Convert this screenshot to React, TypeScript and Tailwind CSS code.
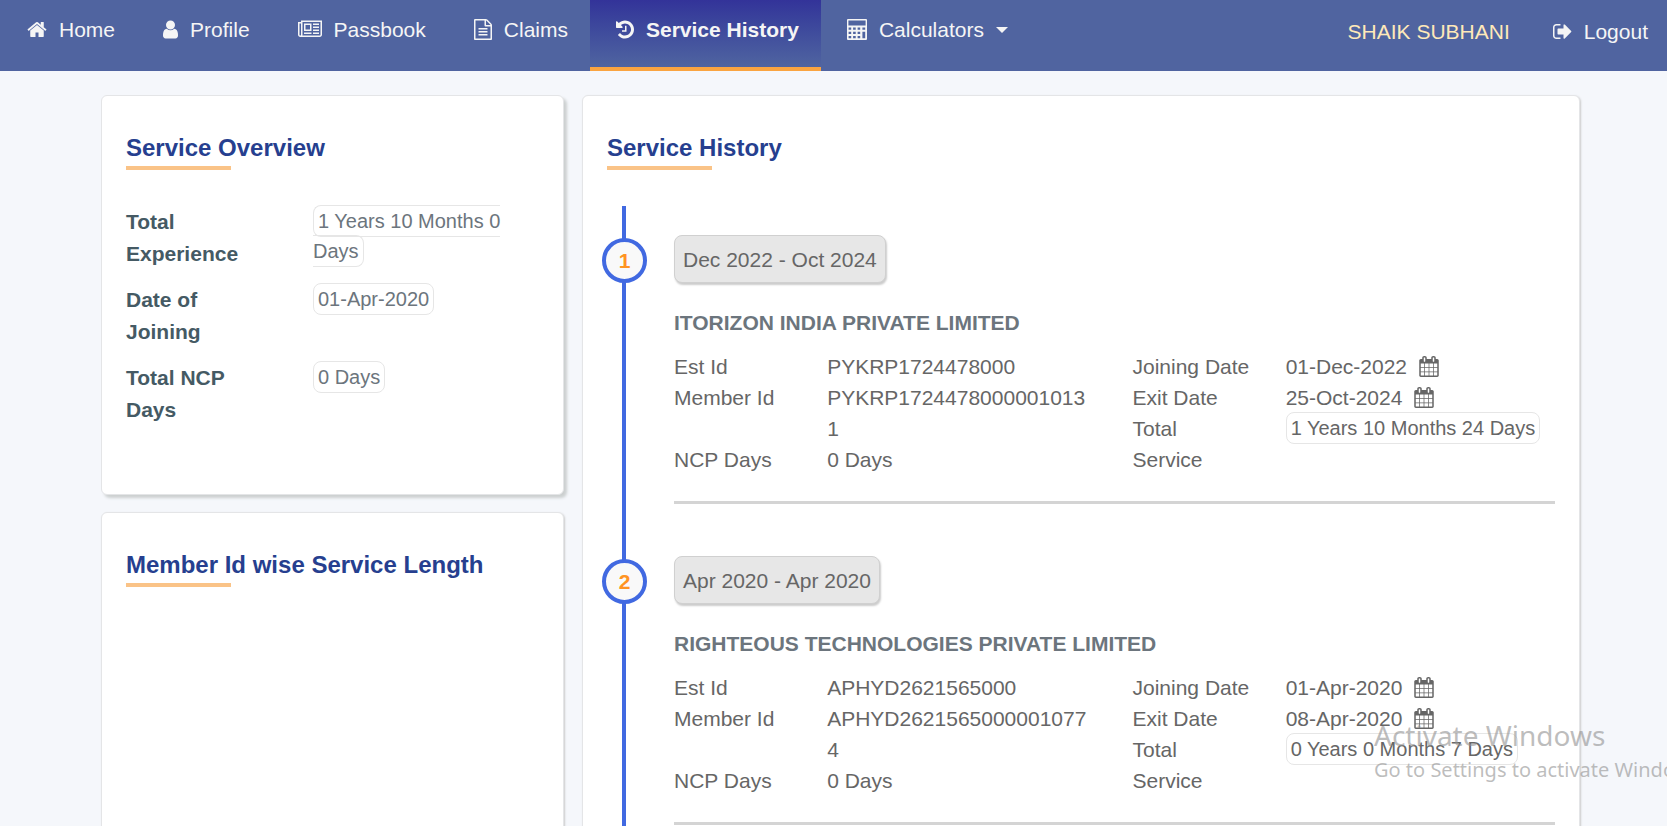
import type { ReactNode } from "react";

type IconProps = { box: string; d: string; className?: string };

function Glyph({ box, d, className = "" }: IconProps) {
  return (
    <svg viewBox={box} className={`h-[21px] shrink-0 ${className}`} fill="currentColor" aria-hidden="true">
      <path d={d} />
    </svg>
  );
}

const HOME =
  "M1472 992v480q0 26-19 45t-45 19h-384v-384h-256v384h-384q-26 0-45-19t-19-45v-480q0-1 .5-3t.5-3l575-474 575 474q1 2 1 6zm223-69l-62 74q-8 9-21 11h-3q-13 0-21-7l-692-577-692 577q-12 8-24 7-13-2-21-11l-62-74q-8-10-7-23.5t11-21.5l719-599q32-26 76-26t76 26l244 204v-195q0-14 9-23t23-9h192q14 0 23 9t9 23v408l219 182q10 8 11 21.5t-7 23.5z";
const USER =
  "M1536 1399q0 109-62.5 187t-150.5 78h-854q-88 0-150.5-78t-62.5-187q0-85 8.5-160.5t31.5-152 58.5-131 94-89 134.5-34.5q131 128 313 128t313-128q76 0 134.5 34.5t94 89 58.5 131 31.5 152 8.5 160.5zm-256-887q0 159-112.5 271.5t-271.5 112.5-271.5-112.5-112.5-271.5 112.5-271.5 271.5-112.5 271.5 112.5 112.5 271.5z";
const NEWS =
  "M1024 512h-384v384h384v-384zm128 640v128h-640v-128h640zm0-768v640h-640v-640h640zm640 768v128h-512v-128h512zm0-256v128h-512v-128h512zm0-256v128h-512v-128h512zm0-256v128h-512v-128h512zm-1536 960v-960h-128v960q0 26 19 45t45 19 45-19 19-45zm1664 0v-1088h-1536v1088q0 33-11 64h1483q26 0 45-19t19-45zm128-1216v1216q0 80-56 136t-136 56h-1664q-80 0-136-56t-56-136v-1088h256v-128h1792z";
const FILE =
  "M1596 380q28 28 48 76t20 88v1152q0 40-28 68t-68 28h-1344q-40 0-68-28t-28-68v-1600q0-40 28-68t68-28h896q40 0 88 20t76 48zm-444-244v376h376q-10-29-22-41l-313-313q-12-12-41-22zm384 1528v-1024h-416q-40 0-68-28t-28-68v-416h-768v1536h1280zm-1024-864q0-14 9-23t23-9h704q14 0 23 9t9 23v64q0 14-9 23t-23 9h-704q-14 0-23-9t-9-23v-64zm736 224q14 0 23 9t9 23v64q0 14-9 23t-23 9h-704q-14 0-23-9t-9-23v-64q0-14 9-23t23-9h704zm0 256q14 0 23 9t9 23v64q0 14-9 23t-23 9h-704q-14 0-23-9t-9-23v-64q0-14 9-23t23-9h704z";
const HISTORY =
  "M1664 896q0 156-61 298t-164 245-245 164-298 61q-172 0-327-72.5t-264-204.5q-7-10-6.5-22.5t8.5-20.5l137-138q10-9 25-9 16 2 23 12 73 95 179 147t225 52q104 0 198.5-40.5t163.5-109.5 109.5-163.5 40.5-198.5-40.5-198.5-109.5-163.5-163.5-109.5-198.5-40.5q-98 0-188 35.5t-160 101.5l137 138q31 30 14 69-17 40-59 40h-448q-26 0-45-19t-19-45v-448q0-42 40-59 39-17 69 14l130 129q107-101 244.5-156.5t284.5-55.5q156 0 298 61t245 164 164 245 61 298zm-640-288v448q0 14-9 23t-23 9h-320q-14 0-23-9t-9-23v-64q0-14 9-23t23-9h224v-352q0-14 9-23t23-9h64q14 0 23 9t9 23z";
const SIGN_OUT =
  "M704 1440q0 4 1 20t.5 26.5-3 23.5-10 19.5-20.5 6.5h-320q-119 0-203.5-84.5t-84.5-203.5v-704q0-119 84.5-203.5t203.5-84.5h320q13 0 22.5 9.5t9.5 22.5q0 4 1 20t.5 26.5-3 23.5-10 19.5-20.5 6.5h-320q-66 0-113 47t-47 113v704q0 66 47 113t113 47h312l11.5 1 11.5 3 8 5.5 7 9 2 13.5zm928-544q0 26-19 45l-544 544q-19 19-45 19t-45-19-19-45v-288h-448q-26 0-45-19t-19-45v-384q0-26 19-45t45-19h448v-288q0-26 19-45t45-19 45 19l544 544q19 19 19 45z";
const CALENDAR =
  "M192 1664h288v-288h-288v288zm352 0h320v-288h-320v288zm-352-352h288v-320h-288v320zm352 0h320v-320h-320v320zm-352-384h288v-288h-288v288zm736 736h320v-288h-320v288zm-384-736h320v-288h-320v288zm768 736h288v-288h-288v288zm-384-352h320v-320h-320v320zm-352-864v-288q0-13-9.5-22.5t-22.5-9.5h-64q-13 0-22.5 9.5t-9.5 22.5v288q0 13 9.5 22.5t22.5 9.5h64q13 0 22.5-9.5t9.5-22.5zm736 864h288v-320h-288v320zm-384-384h320v-288h-320v288zm384 0h288v-288h-288v288zm32-480v-288q0-13-9.5-22.5t-22.5-9.5h-64q-13 0-22.5 9.5t-9.5 22.5v288q0 13 9.5 22.5t22.5 9.5h64q13 0 22.5-9.5t9.5-22.5zm384-64v1280q0 52-38 90t-90 38h-1408q-52 0-90-38t-38-90v-1280q0-52 38-90t90-38h128v-96q0-66 47-113t113-47h64q66 0 113 47t47 113v96h384v-96q0-66 47-113t113-47h64q66 0 113 47t47 113v96h128q52 0 90 38t38 90z";

function CalculatorIcon() {
  return (
    <svg viewBox="0 0 20 21" className="h-[21px] w-5 shrink-0" fill="currentColor" aria-hidden="true">
      <path
        fillRule="evenodd"
        d="M1 0h18a1 1 0 0 1 1 1v19a1 1 0 0 1-1 1H1a1 1 0 0 1-1-1V1a1 1 0 0 1 1-1z M1.4 1.5v5h17.2v-5z M1.6 8.4v2.4h2.6V8.4z M6.1 8.4v2.4h2.6V8.4z M10.6 8.4v2.4h2.6V8.4z M15.4 8.4v2.4h2.8V8.4z M1.6 12.7v2.4h2.6v-2.4z M6.1 12.7v2.4h2.6v-2.4z M10.6 12.7v2.4h2.6v-2.4z M15.4 12.7v6.6h2.8v-6.6z M1.6 16.9v2.4h2.6v-2.4z M6.1 16.9v2.4h2.6v-2.4z M10.6 16.9v2.4h2.6v-2.4z"
      />
    </svg>
  );
}

const navItems = [
  { label: "Home", icon: <Glyph box="64 0 1664 1792" d={HOME} className="w-5" /> },
  { label: "Profile", icon: <Glyph box="256 0 1280 1792" d={USER} className="w-[15px]" /> },
  { label: "Passbook", icon: <Glyph box="0 0 2048 1792" d={NEWS} className="w-6" /> },
  { label: "Claims", icon: <Glyph box="128 0 1536 1792" d={FILE} className="w-[18px]" /> },
  { label: "Service History", icon: <Glyph box="128 0 1536 1792" d={HISTORY} className="w-[18px]" />, active: true },
];

const overview = [
  { label: "Total Experience", value: "1 Years 10 Months 0 Days" },
  { label: "Date of Joining", value: "01-Apr-2020" },
  { label: "Total NCP Days", value: "0 Days" },
];

const services = [
  {
    period: "Dec 2022 - Oct 2024",
    company: "ITORIZON INDIA PRIVATE LIMITED",
    estId: "PYKRP1724478000",
    memberId: "PYKRP17244780000010131",
    ncp: "0 Days",
    joined: "01-Dec-2022",
    exited: "25-Oct-2024",
    total: "1 Years 10 Months 24 Days",
  },
  {
    period: "Apr 2020 - Apr 2020",
    company: "RIGHTEOUS TECHNOLOGIES PRIVATE LIMITED",
    estId: "APHYD2621565000",
    memberId: "APHYD26215650000010774",
    ncp: "0 Days",
    joined: "01-Apr-2020",
    exited: "08-Apr-2020",
    total: "0 Years 0 Months 7 Days",
  },
];

function Chip({ children }: { children: ReactNode }) {
  return <span className="rounded-lg border border-[#e6e6e6] px-1 py-1 text-[20px]">{children}</span>;
}

function Card({ title, className, children }: { title: string; className: string; children?: ReactNode }) {
  return (
    <section className={`rounded-md border border-[#e4e5e7] bg-white px-6 pt-[34px] ${className}`}>
      <h2 className="text-2xl leading-9 font-bold text-[#263f8f]">{title}</h2>
      <div className="h-1 w-[105px] bg-[#fac387]" />
      {children}
    </section>
  );
}

function DateValue({ children }: { children: ReactNode }) {
  return (
    <dd className="flex items-center gap-3">
      {children}
      <Glyph box="64 0 1664 1792" d={CALENDAR} className="w-5" />
    </dd>
  );
}

export default function App() {
  return (
    <div className="relative flex h-screen flex-col overflow-hidden bg-[#f5f7fb] font-['Liberation_Sans',Arial,sans-serif] text-[21px] leading-[31px] text-[#666]">
      <header className="flex h-[71px] shrink-0 justify-between bg-[#5064a0] pr-[19px] pl-px text-[#f5f5f5]">
        <nav className="flex">
          {navItems.map((item) => (
            <a
              key={item.label}
              href="#"
              aria-current={item.active ? "page" : undefined}
              className={`flex items-start gap-3 border-b-4 pt-[14px] pr-[22px] pl-[26px] whitespace-nowrap ${
                item.active
                  ? "border-[#faa441] bg-linear-to-b from-[#333399] to-[#5064a0] font-bold"
                  : "border-transparent"
              }`}
            >
              <span className="flex h-[31px] items-center">{item.icon}</span>
              {item.label}
            </a>
          ))}
          <button type="button" className="flex items-start gap-3 pt-[14px] pr-[22px] pl-[26px] whitespace-nowrap">
            <span className="flex h-[31px] items-center">
              <CalculatorIcon />
            </span>
            Calculators
            <span className="flex h-[31px] items-center">
              <svg viewBox="0 0 12 6" className="h-[6px] w-3" fill="currentColor" aria-hidden="true">
                <path d="M0 0h12L6 6z" />
              </svg>
            </span>
          </button>
        </nav>
        <div className="flex items-start gap-[42px] pt-4 whitespace-nowrap">
          <span className="text-[#ffe9b9]">SHAIK SUBHANI</span>
          <a href="#" className="flex gap-3">
            <span className="flex h-[31px] items-center">
              <Glyph box="0 0 1664 1792" d={SIGN_OUT} className="w-5" />
            </span>
            Logout
          </a>
        </div>
      </header>

      <main className="grid min-h-0 grow grid-cols-[463fr_998fr] gap-[18px] pt-6 pr-[87px] pl-[101px]">
        <div className="flex min-h-0 flex-col gap-[17px]">
          <Card title="Service Overview" className="shrink-0 pb-[54px] shadow-[3px_3px_3px_#ccd0d0]">
            <dl className="pt-9">
              {overview.map((row) => (
                <div key={row.label} className="grid grid-cols-[140fr_226fr] gap-[47px] pb-[14px]">
                  <dt className="leading-8 font-bold text-[#455a64]">{row.label}</dt>
                  <dd className="leading-[29px] text-[#6c757d]">
                    <Chip>{row.value}</Chip>
                  </dd>
                </div>
              ))}
            </dl>
          </Card>
          <Card title="Member Id wise Service Length" className="min-h-[360px] shadow-[1px_1px_2px_#ccc]" />
        </div>

        <Card title="Service History" className="h-max shadow-[1px_1px_2px_#ccc]">
          <ol className="relative mt-9 -ml-[5px] pt-[29px]">
            <li aria-hidden="true" className="absolute top-0 bottom-0 left-5 w-1 bg-[#4169e1]" />
            {services.map((s, i) => (
              <li key={s.company} className="relative flex gap-[27px] pb-[52px]">
                <span className="mt-[3px] flex size-[45px] shrink-0 items-center justify-center rounded-full border-4 border-[#4169e1] bg-[#f9f9f9] font-bold text-[#ff9322]">
                  {i + 1}
                </span>
                <div className="min-w-0 grow border-b-[3px] border-[#d4d4d4] pb-[26px]">
                  <div className="flex h-12 w-max items-center rounded-lg border border-[#d0d0d0] bg-[#e7e7e7] px-2 shadow-[1px_2px_2px_#ccc]">
                    {s.period}
                  </div>
                  <h3 className="mt-6 mb-[13px] font-bold text-[#6c757d]">{s.company}</h3>
                  <div className="grid grid-cols-2 gap-9">
                    <dl className="grid grid-cols-[117fr_269fr] gap-x-9 self-start">
                      <dt>Est Id</dt>
                      <dd>{s.estId}</dd>
                      <dt>Member Id</dt>
                      <dd className="break-all">{s.memberId}</dd>
                      <dt>NCP Days</dt>
                      <dd>{s.ncp}</dd>
                    </dl>
                    <dl className="grid grid-cols-[117fr_269fr] gap-x-9 self-start">
                      <dt>Joining Date</dt>
                      <DateValue>{s.joined}</DateValue>
                      <dt>Exit Date</dt>
                      <DateValue>{s.exited}</DateValue>
                      <dt>Total Service</dt>
                      <dd className="leading-[29px] whitespace-nowrap">
                        <Chip>{s.total}</Chip>
                      </dd>
                    </dl>
                  </div>
                </div>
              </li>
            ))}
          </ol>
        </Card>
      </main>

      <div className="pointer-events-none absolute right-0 bottom-10 w-[293px] overflow-hidden font-['Noto_Sans','Open_Sans',sans-serif] whitespace-nowrap text-[#919191]/60">
        <p className="text-[28px] leading-[38px]">Activate Windows</p>
        <p className="text-[20px] leading-8">Go to Settings to activate Windows.</p>
      </div>
    </div>
  );
}
